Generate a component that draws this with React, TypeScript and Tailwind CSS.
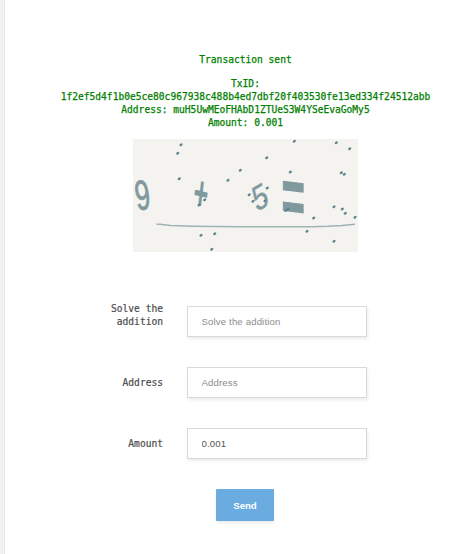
const SPECKS = [
  [48, 5.7], [44.7, 14.3], [46.3, 39.7], [107.3, 31.3], [95, 41.3], [116.2, 55.7],
  [68, 96.3], [81.7, 94.7], [78.7, 110.3], [66, 66], [71.7, 60.7], [161.3, 2.3],
  [133.7, 18.7], [157.3, 33], [203.3, 3.7], [216.7, 9.7], [208.3, 33.7], [211.3, 35.3],
  [120, 62.3], [134.3, 49], [132, 61.7], [155.3, 70], [153, 71.5], [180.7, 79], [174, 92.3],
  [201, 67.7], [209.3, 70], [212.3, 74.3], [222, 78.3], [201, 102.3],
];

function Captcha() {
  return (
    <svg width="225" height="113" viewBox="0 0 225 113" className="mt-[10px] block bg-[#f4f3ef]" fontFamily="Liberation Sans, sans-serif">
      <g fill="#80999e">
        <text transform="translate(4 71.5) rotate(-8) scale(0.64 1)" fontSize="42" stroke="#80999e" strokeWidth="0.8">9</text>
        <text transform="translate(58.8 69) rotate(7) skewY(6) scale(0.98 1.85)" fontSize="26" fontWeight="bold">+</text>
        <text transform="translate(123.5 73) skewY(-30) skewX(14) scale(0.72 1.12)" fontSize="34" stroke="#80999e" strokeWidth="0.4">5</text>
        <text transform="translate(148.5 82) skewY(7) scale(1.25 2.4)" fontSize="32" fontWeight="bold" stroke="#80999e" strokeWidth="0.5">=</text>
      </g>
      <path d="M23.5 85.3h3.5l11 1.2 22 .7 45 .5h75l15-.5 14-.8 13-1.2" fill="none" stroke="#9fb2b6" strokeWidth="1.5" />
      {SPECKS.map(([x, y]) => (
        <ellipse key={`${x}-${y}`} cx={x} cy={y} rx="1.75" ry="1.2" fill="#5e828b" transform={`rotate(-35 ${x} ${y})`} />
      ))}
    </svg>
  );
}

type FieldProps = { label: string; placeholder?: string; value?: string; raised?: boolean };

function Field({ label, placeholder, value, raised }: FieldProps) {
  return (
    <label className="flex h-[31px] items-center">
      <span className={`w-[72px] text-right text-[#4c4c4c] [-webkit-text-stroke:0.2px_#4c4c4c] ${raised ? "pb-[14px]" : ""}`}>{label}</span>
      <input
        className="ml-6 h-[31px] w-[180px] border border-[#d9d9d9] bg-white px-[13.5px] font-['Liberation_Sans',sans-serif] text-[9.6px] tracking-[0.15px] text-[#555] shadow-[1px_2px_3px_rgba(0,0,0,0.08)] outline-none placeholder:text-[#8c8c8c]"
        placeholder={placeholder}
        defaultValue={value}
      />
    </label>
  );
}

export default function App() {
  return (
    <div className="flex h-[554px] w-[475px] overflow-hidden bg-white font-['DejaVu_Sans_Mono',monospace] text-[9.6px] leading-[13px]">
      <div className="w-[5px] shrink-0 border-r border-[#e8e8e8] bg-[#f2f2f2]" />
      <main className="flex w-[481px] shrink-0 flex-col items-center pt-[53px]">
        <div className="text-center text-[#008000] [-webkit-text-stroke:0.25px_#008000]">
          <p>Transaction sent</p>
          <p className="mt-[11px]">
            TxID:<br />
            1f2ef5d4f1b0e5ce80c967938c488b4ed7dbf20f403530fe13ed334f24512abb<br />
            Address: muH5UwMEoFHAbD1ZTUeS3W4YSeEvaGoMy5<br />
            Amount: 0.001
          </p>
        </div>
        <Captcha />
        <form className="mt-[54px] flex w-[309px] flex-col gap-[30px]">
          <Field label="Solve the addition" placeholder="Solve the addition" raised />
          <Field label="Address" placeholder="Address" />
          <Field label="Amount" value="0.001" />
          <button type="button" className="ml-[125px] h-8 w-[58px] rounded-[1px] bg-[#6aace0] font-['Liberation_Sans',sans-serif] text-[9.6px] font-bold text-white shadow-[0_2px_3px_rgba(0,0,0,0.08)]">
            Send
          </button>
        </form>
      </main>
    </div>
  );
}
